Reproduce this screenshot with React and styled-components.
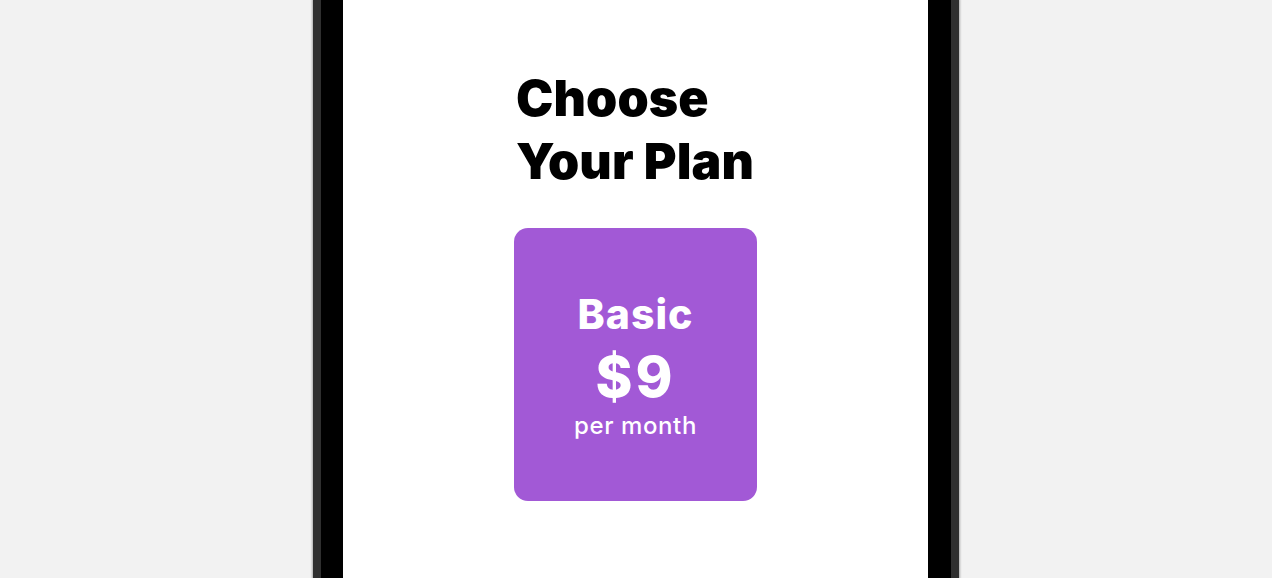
import React from 'react';
import styled, { createGlobalStyle } from 'styled-components';

const GlobalStyle = createGlobalStyle`
  html, body {
    margin: 0;
    padding: 0;
    height: 100%;
    overflow: hidden;
    background: #f2f2f2;
    font-family: Inter, "Noto Sans", sans-serif;
  }
`;

const Page = styled.div`
  display: flex;
  justify-content: center;
  height: 100vh;
`;

const Phone = styled.div`
  width: 630px;
  height: 100%;
  padding: 0 8px;
  background: #2f2f2f;
  box-shadow: 0 0 2px 1px rgba(0, 0, 0, 0.3);
  display: flex;
`;

const Bezel = styled.div`
  flex: 1;
  background: #000;
  padding: 0 23px 0 22px;
  display: flex;
`;

const Screen = styled.div`
  flex: 1;
  background: #fff;
  display: flex;
  justify-content: center;
  padding-top: 67px;
`;

const Content = styled.div`
  width: 243px;
  display: flex;
  flex-direction: column;
`;

const Title = styled.h1`
  margin: 0 0 35px 0;
  padding-left: 2px;
  font-size: 50px;
  font-weight: 900;
  line-height: 63px;
  letter-spacing: 0.1px;
  color: #000;
`;

const Card = styled.div`
  height: 273px;
  border-radius: 14px;
  background: #a259d6;
  color: #fff;
  display: flex;
  flex-direction: column;
  align-items: center;
  justify-content: center;
  padding-top: 3px;
  box-sizing: border-box;
`;

const PlanName = styled.div`
  font-size: 41px;
  font-weight: 800;
  line-height: 44px;
  letter-spacing: 1px;
  margin-bottom: 11px;
`;

const Price = styled.div`
  font-size: 56px;
  font-weight: 800;
  line-height: 60px;
  letter-spacing: 3px;
  margin-bottom: 4px;
`;

const Period = styled.div`
  font-size: 24px;
  font-weight: 500;
  line-height: 30px;
  letter-spacing: 0.6px;
`;

export default function App() {
  return (
    <>
      <GlobalStyle />
      <Page>
        <Phone>
          <Bezel>
            <Screen>
              <Content>
                <Title>Choose Your Plan</Title>
                <Card>
                  <PlanName>Basic</PlanName>
                  <Price>$9</Price>
                  <Period>per month</Period>
                </Card>
              </Content>
            </Screen>
          </Bezel>
        </Phone>
      </Page>
    </>
  );
}
